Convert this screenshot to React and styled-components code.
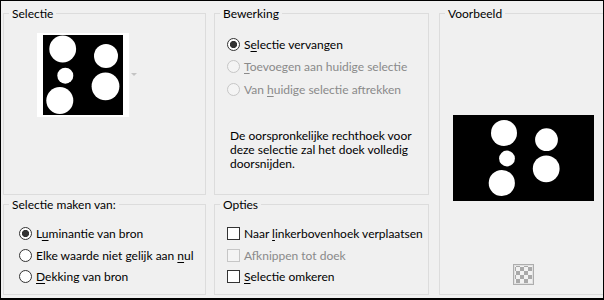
import React from 'react';
import styled, { createGlobalStyle } from 'styled-components';

const GlobalStyle = createGlobalStyle`
  html, body {
    margin: 0;
    padding: 0;
    background: #f0f0f0;
  }
  body {
    font-family: Lato, "Noto Sans", sans-serif;
    font-size: 12px;
    color: #000;
  }
`;

const Dialog = styled.div`
  box-sizing: border-box;
  width: 604px;
  height: 300px;
  border: 1px solid #000;
  border-bottom-width: 2px;
  padding: 12px 0 3px 2px;
  background: #f0f0f0;
  display: flex;
  overflow: hidden;
`;

const Columns = styled.div`
  flex: none;
  display: grid;
  grid-template-columns: 203px 215px;
  grid-template-rows: 182px 91px;
  column-gap: 8px;
  row-gap: 9px;
`;

const Group = styled.div`
  position: relative;
  box-sizing: border-box;
  border: 1px solid #dcdcdc;
  display: flex;
  flex-direction: column;
  padding: ${({ $pad }) => $pad || '0'};
`;

const PreviewGroup = styled(Group)`
  flex: none;
  width: 168px;
  margin-left: 10px;
  align-items: center;
`;

const Legend = styled.span`
  position: absolute;
  top: -8px;
  left: 5px;
  padding: 0 3px;
  line-height: 16px;
  background: #f0f0f0;
  white-space: nowrap;
`;

const ThumbRow = styled.div`
  display: flex;
  align-items: center;
  gap: 2px;
`;

const Thumb = styled.div`
  background: #fff;
  padding: 2px 6px;
  line-height: 0;
`;

const Option = styled.div`
  display: flex;
  align-items: center;
  height: ${({ $h }) => $h || '22px'};
  white-space: nowrap;
  color: ${({ $disabled }) => ($disabled ? '#8a8a8a' : '#000')};
`;

const Radio = styled.span`
  box-sizing: border-box;
  flex: none;
  width: 13px;
  height: 13px;
  margin-right: 4px;
  border-radius: 50%;
  border: 1px solid ${({ $disabled }) => ($disabled ? '#c6c6c6' : '#333')};
  background: ${({ $disabled, $checked }) =>
    $checked
      ? 'radial-gradient(circle, #333 3.3px, #fff 3.9px)'
      : $disabled
        ? '#f4f4f4'
        : '#fff'};
`;

const Check = styled.span`
  box-sizing: border-box;
  flex: none;
  width: 13px;
  height: 13px;
  margin-right: 4px;
  border: 1px solid ${({ $disabled }) => ($disabled ? '#c6c6c6' : '#333')};
  background: ${({ $disabled }) => ($disabled ? '#f4f4f4' : '#fff')};
`;

const Key = styled.span`
  text-decoration: underline;
  text-underline-offset: 2px;
`;

const Note = styled.p`
  margin: 28px 0 0 3px;
  line-height: 14px;
`;

const PreviewImage = styled.svg`
  display: block;
  margin-top: 101px;
`;

const CheckerButton = styled.div`
  box-sizing: border-box;
  width: 21px;
  height: 21px;
  margin-top: auto;
  margin-bottom: 9px;
  padding: 1px;
  border: 1px solid #adadad;
  background:
    conic-gradient(#a9a9a9 25%, #f2f2f2 0 50%, #a9a9a9 0 75%, #f2f2f2 0) content-box 1px 1px / 8px 8px,
    #e1e1e1;
`;

const thumbDots = [
  [19.7, 14, 13.4],
  [63, 21, 12],
  [22.3, 40.7, 8],
  [62.5, 51.3, 13.9],
  [16.8, 65.5, 13.5],
];

const previewDots = [
  [51, 18, 13],
  [93.5, 24.7, 11.4],
  [54, 43.5, 7.9],
  [93.2, 53.8, 13.4],
  [48.8, 68, 13.1],
];

const Dots = ({ dots }) =>
  dots.map(([cx, cy, r], i) => <circle key={i} cx={cx} cy={cy} r={r} fill="#fff" />);

export default function App() {
  return (
    <>
      <GlobalStyle />
      <Dialog>
        <Columns>
          <Group $pad="19px 0 0 33px">
            <Legend>Selectie</Legend>
            <ThumbRow>
              <Thumb>
                <svg width="80" height="80" viewBox="0 0 80 80">
                  <rect width="80" height="80" fill="#000" />
                  <Dots dots={thumbDots} />
                </svg>
              </Thumb>
              <svg width="6" height="4" viewBox="0 0 6 4">
                <polygon points="0,0 6,0 3,3" fill="#c4c4c4" />
              </svg>
            </ThumbRow>
          </Group>

          <Group $pad="19px 0 0 12px">
            <Legend>Bewerking</Legend>
            <Option $h="22.5px">
              <Radio $checked />
              <span>S<Key>e</Key>lectie vervangen</span>
            </Option>
            <Option $h="22.5px" $disabled>
              <Radio $disabled />
              <span><Key>T</Key>oevoegen aan huidige selectie</span>
            </Option>
            <Option $h="22.5px" $disabled>
              <Radio $disabled />
              <span>Van <Key>h</Key>uidige selectie aftrekken</span>
            </Option>
            <Note>
              De oorspronkelijke rechthoek voor<br />
              deze selectie zal het doek volledig<br />
              doorsnijden.
            </Note>
          </Group>

          <Group $pad="18px 0 0 15px">
            <Legend>Selectie maken van:</Legend>
            <Option $h="21.5px">
              <Radio $checked />
              <span>L<Key>u</Key>minantie van bron</span>
            </Option>
            <Option $h="21.5px">
              <Radio />
              <span>Elke waarde niet gelijk aan <Key>n</Key>ul</span>
            </Option>
            <Option $h="21.5px">
              <Radio />
              <span><Key>D</Key>ekking van bron</span>
            </Option>
          </Group>

          <Group $pad="18px 0 0 12px">
            <Legend>Opties</Legend>
            <Option $h="21.5px">
              <Check />
              <span>Naar <Key>l</Key>inkerbovenhoek verplaatsen</span>
            </Option>
            <Option $h="21.5px" $disabled>
              <Check $disabled />
              <span>Af<Key>k</Key>nippen tot doek</span>
            </Option>
            <Option $h="21.5px">
              <Check />
              <span><Key>S</Key>electie omkeren</span>
            </Option>
          </Group>
        </Columns>

        <PreviewGroup>
          <Legend>Voorbeeld</Legend>
          <PreviewImage width="141" height="86" viewBox="0 0 141 86">
            <rect width="141" height="86" fill="#000" />
            <Dots dots={previewDots} />
          </PreviewImage>
          <CheckerButton />
        </PreviewGroup>
      </Dialog>
    </>
  );
}
